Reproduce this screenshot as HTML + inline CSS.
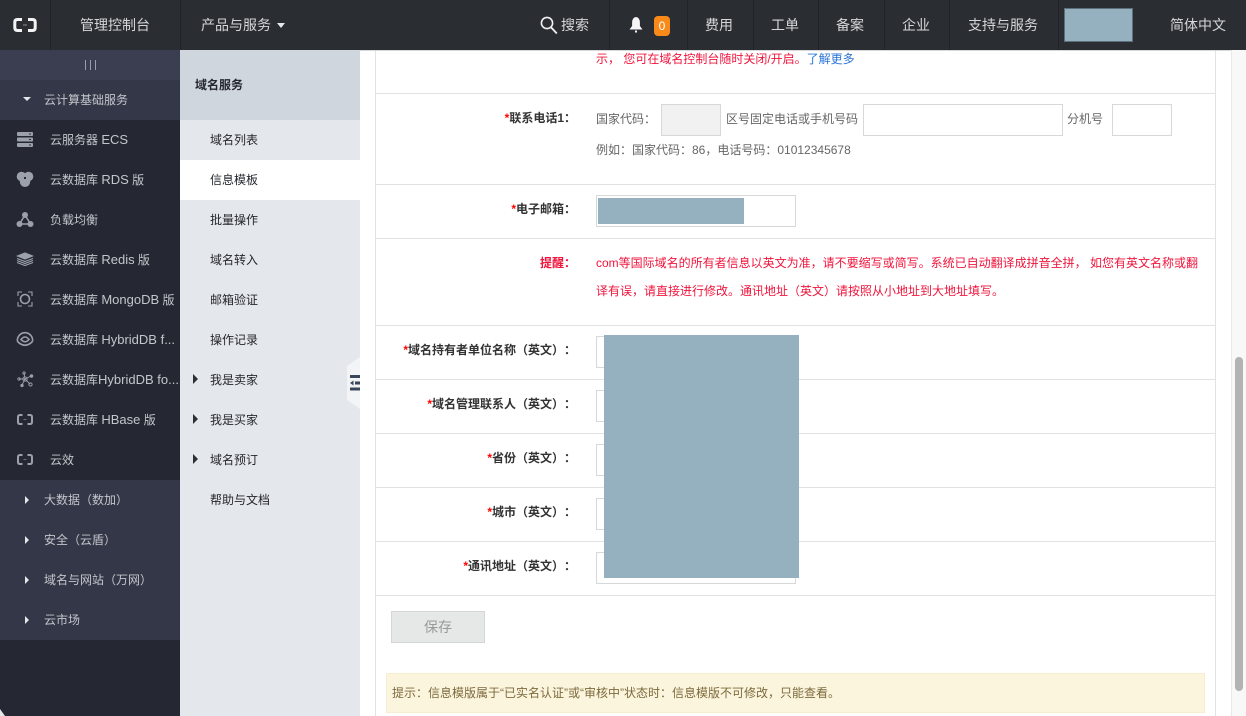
<!DOCTYPE html>
<html lang="zh-CN"><head><meta charset="utf-8"><title>信息模板</title>
<style>
html,body{margin:0;padding:0;width:1246px;height:716px;overflow:hidden;background:#fff}
body{position:relative;font-family:"Liberation Sans","Noto Sans CJK SC",sans-serif;font-size:12px;color:#333;text-spacing-trim:space-all}
div,span,a,svg{position:absolute;display:block;box-sizing:border-box}
.t{white-space:nowrap;line-height:20px}
.top{color:#d5d7d9;font-size:14px;top:15px}
.sep{top:0;width:1px;height:50px;background:#212327}
.side{color:#c3c6cb;font-size:12px}
.side b{font-weight:normal;font-size:13px}
.sub{color:#24272d;font-size:12px}
.line{left:376px;width:839px;height:1px;background:#e2e2e2}
.lab{color:#333;font-size:12px;font-weight:bold;right:670px;text-align:right}
.lab i{color:#f00;font-style:normal}
.gr{color:#666;font-size:12px}
.in{background:#fff;border:1px solid #d7d8d9}
.red{color:#f0143c;font-size:12px}
.blk{background:#95b0bf}
.tri{width:0;height:0;border-style:solid;border-color:transparent}
</style></head><body>

<!-- top bar -->
<div style="left:0;top:0;width:1246px;height:50px;background:#2a2d32"></div>
<svg style="left:13px;top:17px" width="24" height="16" viewBox="0 0 24 16"><path d="M9 2.500H4.500Q1.800 2.500 1.800 5.200V10.800Q1.800 13.500 4.500 13.500H9M15 2.500H19.500Q22.200 2.500 22.200 5.200V10.800Q22.200 13.500 19.500 13.500H15" fill="none" stroke="#f2f3f4" stroke-width="3"/><path d="M10 8H14" stroke="#8d8f92" stroke-width="1"/></svg>
<div class="sep" style="left:50px"></div>
<div class="t top" style="left:80px">管理控制台</div>
<div class="sep" style="left:180px"></div>
<div class="t top" style="left:201px">产品与服务</div>
<div class="tri" style="left:277px;top:23px;border-width:5px 4.500px 0;border-top-color:#e8e9ea"></div>
<svg style="left:539px;top:15px" width="20" height="20" viewBox="0 0 20 20"><circle cx="8" cy="8" r="5.600" fill="none" stroke="#f0f1f2" stroke-width="1.600"/><path d="M12 12.300L17.800 18.500" stroke="#f0f1f2" stroke-width="1.800"/></svg>
<div class="t top" style="left:561px">搜索</div>
<div class="sep" style="left:609px"></div>
<svg style="left:629px;top:16px" width="14" height="17" viewBox="0 0 14 17"><path d="M7 1Q10.800 1.500 10.900 6.500V10L13.500 13.500H.5L3.100 10V6.500Q3.200 1.500 7 1Z" fill="#f5f5f5"/><path d="M6 14.500H8V16.500H6Z" fill="#f5f5f5"/></svg>
<div style="left:654px;top:16px;width:16px;height:20px;background:#f98a1a;border-radius:4px;color:#fff;font-size:12px;line-height:20px;text-align:center">0</div>
<div class="sep" style="left:687px"></div>
<div class="t top" style="left:705px">费用</div>
<div class="sep" style="left:753px"></div>
<div class="t top" style="left:771px">工单</div>
<div class="sep" style="left:818px"></div>
<div class="t top" style="left:836px">备案</div>
<div class="sep" style="left:884px"></div>
<div class="t top" style="left:902px">企业</div>
<div class="sep" style="left:949px"></div>
<div class="t top" style="left:968px">支持与服务</div>
<div class="sep" style="left:1058px"></div>
<div class="blk" style="left:1064px;top:8px;width:69px;height:34px;border:1px solid #5c6f7b"></div>
<div class="t top" style="left:1170px">简体中文</div>

<!-- left sidebar -->
<div style="left:0;top:50px;width:180px;height:666px;background:#252833"></div>
<div style="left:0;top:50px;width:180px;height:30px;background:#3a3e50"></div>
<div style="left:85px;top:60px;width:1px;height:10px;background:#9a9daa"></div>
<div style="left:90px;top:60px;width:1px;height:10px;background:#9a9daa"></div>
<div style="left:95px;top:60px;width:1px;height:10px;background:#9a9daa"></div>
<div style="left:0;top:80px;width:180px;height:40px;background:#343748"></div>
<div class="tri" style="left:23px;top:97px;border-width:4px 4px 0;border-top-color:#e6e7ea"></div>
<div class="t side" style="left:44px;top:90px">云计算基础服务</div>

<svg style="left:16px;top:131px" width="18" height="17" viewBox="0 0 18 17" fill="#9ba0aa"><rect x="1" y="1" width="16" height="4" rx="1"/><rect x="1" y="6.500" width="16" height="4" rx="1"/><rect x="1" y="12" width="16" height="4" rx="1"/><path d="M13 2.500h2v1h-2zM13 8h2v1h-2zM13 13.500h2v1h-2z" fill="#252833"/></svg>
<div class="t side" style="left:50px;top:130px">云服务器 <b>ECS</b></div>
<svg style="left:16px;top:171px" width="18" height="17" viewBox="0 0 18 17" fill="#9ba0aa"><circle cx="5.500" cy="5.500" r="4.800"/><circle cx="12.500" cy="5.500" r="4.800"/><circle cx="9" cy="10.800" r="5.200"/><rect x="8" y="6" width="2" height="2" fill="#252833"/></svg>
<div class="t side" style="left:50px;top:170px">云数据库 <b>RDS</b> 版</div>
<svg style="left:16px;top:211px" width="18" height="17" viewBox="0 0 18 17"><path d="M9 4L3.500 13H14.500Z" fill="none" stroke="#9ba0aa" stroke-width="1.500"/><circle cx="9" cy="4" r="3" fill="#9ba0aa"/><circle cx="3.500" cy="13" r="3" fill="#9ba0aa"/><circle cx="14.500" cy="13" r="3" fill="#9ba0aa"/></svg>
<div class="t side" style="left:50px;top:210px">负载均衡</div>
<svg style="left:16px;top:252px" width="18" height="15" viewBox="0 0 18 15" fill="none" stroke="#9ba0aa" stroke-width="1.200"><path d="M1.500 4L9 1L16.500 4L9 7Z" fill="#9ba0aa"/><path d="M1 6.500L9 9.500L17 6.500M1 8.500L9 11.500L17 8.500M1 10.500L9 13.500L17 10.500"/></svg>
<div class="t side" style="left:50px;top:250px">云数据库 <b>Redis</b> 版</div>
<svg style="left:17px;top:291px" width="16" height="16" viewBox="0 0 16 16" fill="none" stroke="#9ba0aa" stroke-width="1.100"><circle cx="8" cy="8" r="4.500" stroke-width="1.600"/><path d="M1 5V1H5M11 1H15V5M15 11V15H11M5 15H1V11"/></svg>
<div class="t side" style="left:50px;top:290px">云数据库 <b>MongoDB</b> 版</div>
<svg style="left:16px;top:331px" width="18" height="16" viewBox="0 0 18 16" fill="none" stroke="#9ba0aa" stroke-width="1.600"><path d="M1.500 10.500A7.600 7.600 0 1 1 16.500 10.500"/><path d="M1.500 10.500Q9 18 16.500 10.500"/><path d="M5 8.500Q9 3.500 13 8.500Q9 13 5 8.500Z"/></svg>
<div class="t side" style="left:50px;top:330px">云数据库 <b>HybridDB f...</b></div>
<svg style="left:17px;top:371px" width="17" height="17" viewBox="0 0 17 17" fill="none" stroke="#9ba0aa" stroke-width=".9"><path d="M8 8L7 2M8 8L14 5M8 8L13 13M8 8L5 14M8 8L2 8"/><circle cx="8" cy="8" r="2.200"/><circle cx="7" cy="2" r="1.200"/><circle cx="14.500" cy="5" r="1.300" fill="#9ba0aa"/><circle cx="13.500" cy="13.500" r="1.600"/><circle cx="5" cy="14.500" r="1.200" fill="#9ba0aa"/><circle cx="2" cy="8" r="1.200"/></svg>
<div class="t side" style="left:50px;top:370px">云数据库<b>HybridDB fo...</b></div>
<svg style="left:17px;top:414px" width="16" height="11" viewBox="0 0 16 11"><path d="M5.500 1H3Q1 1 1 3V8Q1 10 3 10H5.500M10.500 1H13Q15 1 15 3V8Q15 10 13 10H10.500" fill="none" stroke="#9ba0aa" stroke-width="2"/><path d="M6.500 5.500H9.500" stroke="#6b6f7a"/></svg>
<div class="t side" style="left:50px;top:410px">云数据库 <b>HBase</b> 版</div>
<svg style="left:17px;top:454px" width="16" height="11" viewBox="0 0 16 11"><path d="M5.500 1H3Q1 1 1 3V8Q1 10 3 10H5.500M10.500 1H13Q15 1 15 3V8Q15 10 13 10H10.500" fill="none" stroke="#9ba0aa" stroke-width="2"/><path d="M6.500 5.500H9.500" stroke="#6b6f7a"/></svg>
<div class="t side" style="left:50px;top:450px">云效</div>

<div style="left:0;top:480px;width:180px;height:160px;background:#343748"></div>
<div class="tri" style="left:25px;top:496px;border-width:4px 0 4px 4px;border-left-color:#e6e7ea"></div>
<div class="t side" style="left:44px;top:490px">大数据（数加）</div>
<div class="tri" style="left:25px;top:536px;border-width:4px 0 4px 4px;border-left-color:#e6e7ea"></div>
<div class="t side" style="left:44px;top:530px">安全（云盾）</div>
<div class="tri" style="left:25px;top:576px;border-width:4px 0 4px 4px;border-left-color:#e6e7ea"></div>
<div class="t side" style="left:44px;top:570px">域名与网站（万网）</div>
<div class="tri" style="left:25px;top:616px;border-width:4px 0 4px 4px;border-left-color:#e6e7ea"></div>
<div class="t side" style="left:44px;top:610px">云市场</div>
<svg style="left:0;top:709px" width="6" height="7" viewBox="0 0 6 7"><path d="M0 0L5 7H0Z" fill="#e6e6e6"/></svg>

<!-- second column -->
<div style="left:180px;top:50px;width:180px;height:666px;background:#e4e7ec"></div>
<div style="left:180px;top:50px;width:180px;height:70px;background:#d0d6de"></div>
<div style="left:180px;top:160px;width:180px;height:40px;background:#fff"></div>
<div class="t sub" style="left:195px;top:75px;font-weight:bold">域名服务</div>
<div class="t sub" style="left:210px;top:130px">域名列表</div>
<div class="t sub" style="left:210px;top:170px">信息模板</div>
<div class="t sub" style="left:210px;top:210px">批量操作</div>
<div class="t sub" style="left:210px;top:250px">域名转入</div>
<div class="t sub" style="left:210px;top:290px">邮箱验证</div>
<div class="t sub" style="left:210px;top:330px">操作记录</div>
<div class="tri" style="left:193px;top:374px;border-width:5px 0 5px 5px;border-left-color:#2b2f36"></div>
<div class="t sub" style="left:210px;top:370px">我是卖家</div>
<div class="tri" style="left:193px;top:414px;border-width:5px 0 5px 5px;border-left-color:#2b2f36"></div>
<div class="t sub" style="left:210px;top:410px">我是买家</div>
<div class="tri" style="left:193px;top:454px;border-width:5px 0 5px 5px;border-left-color:#2b2f36"></div>
<div class="t sub" style="left:210px;top:450px">域名预订</div>
<div class="t sub" style="left:210px;top:490px">帮助与文档</div>

<!-- collapse handle -->
<svg style="left:347px;top:357px" width="13" height="52" viewBox="0 0 13 52"><path d="M13 0V52L0 43V9Z" fill="#f3f4f6"/><path d="M3 18H13V21H3ZM8 24.500H13V27.500H8ZM3 30.500H13V33.500H3Z" fill="#3a4659"/><path d="M3 26L6.500 23.500V28.500Z" fill="#3a4659"/></svg>

<!-- main panel -->
<div style="left:375px;top:50px;width:1px;height:666px;background:#e2e2e2"></div>
<div style="left:1215px;top:50px;width:1px;height:666px;background:#e2e2e2"></div>
<div style="left:360px;top:50px;width:871px;height:1px;background:#d8d8d8"></div>
<div class="line" style="top:93px"></div>
<div class="line" style="top:184px"></div>
<div class="line" style="top:238px"></div>
<div class="line" style="top:325px"></div>
<div class="line" style="top:379px"></div>
<div class="line" style="top:433px"></div>
<div class="line" style="top:487px"></div>
<div class="line" style="top:541px"></div>
<div class="line" style="top:595px"></div>

<div class="t red" style="left:596px;top:49px">示， 您可在域名控制台随时关闭/开启。<span style="position:static;display:inline;color:#2b74d6">了解更多</span></div>

<div class="t lab" style="top:108px"><i>*</i>联系电话1：</div>
<div class="t gr" style="left:596px;top:109px">国家代码：</div>
<div class="in" style="left:661px;top:104px;width:60px;height:32px;background:#f1f1f2"></div>
<div class="t gr" style="left:726px;top:109px">区号固定电话或手机号码</div>
<div class="in" style="left:863px;top:104px;width:200px;height:32px"></div>
<div class="t gr" style="left:1067px;top:109px">分机号</div>
<div class="in" style="left:1112px;top:104px;width:60px;height:32px"></div>
<div class="t gr" style="left:596px;top:140px">例如：国家代码：86，电话号码：01012345678</div>

<div class="t lab" style="top:199px"><i>*</i>电子邮箱：</div>
<div class="in" style="left:596px;top:195px;width:200px;height:32px"></div>
<div class="blk" style="left:598px;top:198px;width:146px;height:26px"></div>

<div class="t" style="right:670px;top:253px;font-weight:bold;color:#f0143c">提醒：</div>
<div class="t red" style="left:596px;top:253px">com等国际域名的所有者信息以英文为准，请不要缩写或简写。系统已自动翻译成拼音全拼， 如您有英文名称或翻</div>
<div class="t red" style="left:596px;top:281px">译有误，请直接进行修改。通讯地址（英文）请按照从小地址到大地址填写。</div>

<div class="t lab" style="top:340px"><i>*</i>域名持有者单位名称（英文）：</div>
<div class="t lab" style="top:394px"><i>*</i>域名管理联系人（英文）：</div>
<div class="t lab" style="top:448px"><i>*</i>省份（英文）：</div>
<div class="t lab" style="top:502px"><i>*</i>城市（英文）：</div>
<div class="t lab" style="top:556px"><i>*</i>通讯地址（英文）：</div>
<div class="in" style="left:596px;top:336px;width:200px;height:32px"></div>
<div class="in" style="left:596px;top:390px;width:200px;height:32px"></div>
<div class="in" style="left:596px;top:444px;width:200px;height:32px"></div>
<div class="in" style="left:596px;top:498px;width:200px;height:32px"></div>
<div class="in" style="left:596px;top:552px;width:200px;height:32px"></div>
<div class="blk" style="left:604px;top:335px;width:195px;height:243px"></div>

<div style="left:391px;top:611px;width:94px;height:32px;background:#e6e7e7;border:1px solid #d4d5d5;color:#999;font-size:14px;line-height:30px;text-align:center">保存</div>

<div style="left:386px;top:673px;width:819px;height:40px;background:#fbf5de;border:1px solid #f8edd0"></div>
<div class="t" style="left:392px;top:683px;color:#7d6a3c">提示：信息模版属于“已实名认证”或“审核中”状态时：信息模版不可修改，只能查看。</div>

<!-- scrollbar -->
<div style="left:1231px;top:50px;width:15px;height:666px;background:#f8f8f8;border-left:1px solid #e8e8e8"></div>
<div style="left:1235px;top:357px;width:8px;height:334px;background:#b3b3b3;border-radius:4px"></div>
</body></html>
